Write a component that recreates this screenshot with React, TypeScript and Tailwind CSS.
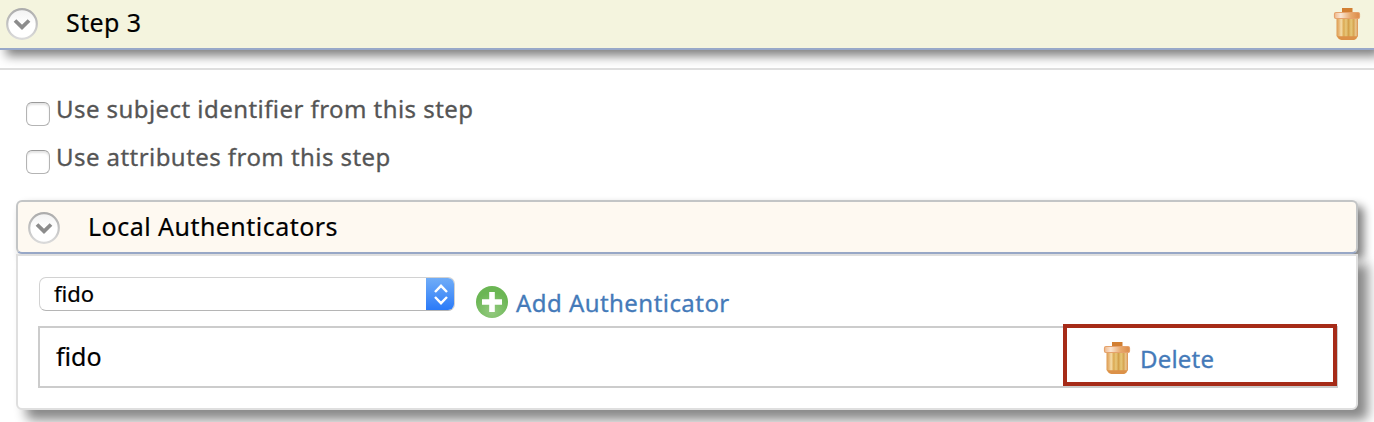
function Chevron() {
  return (
    <svg width="32" height="32" viewBox="0 0 32 32" className="shrink-0">
      <defs>
        <linearGradient id="ring" x1="0" y1="0" x2="0" y2="1">
          <stop offset="0" stopColor="#acacac" />
          <stop offset="1" stopColor="#dadada" />
        </linearGradient>
        <linearGradient id="disc" x1="0" y1="0" x2="0" y2="1">
          <stop offset="0" stopColor="#f2f2f2" />
          <stop offset="0.5" stopColor="#ffffff" />
        </linearGradient>
      </defs>
      <circle cx="16" cy="16" r="14.8" fill="url(#disc)" stroke="url(#ring)" strokeWidth="2.2" />
      <path d="M9 12.500 L16 19.400 L23 12.500" fill="none" stroke="#8c8c8c" strokeWidth="3.800" />
    </svg>
  );
}

function Trash() {
  return (
    <svg width="28" height="32" viewBox="0 0 28 32" className="shrink-0">
      <defs>
        <linearGradient id="lid" x1="0" y1="0" x2="1" y2="0">
          <stop offset="0" stopColor="#efb98c" />
          <stop offset="0.25" stopColor="#fae6d5" />
          <stop offset="0.65" stopColor="#e8a96c" />
          <stop offset="1" stopColor="#dc8a48" />
        </linearGradient>
        <linearGradient id="can" x1="0" y1="0" x2="1" y2="0">
          <stop offset="0" stopColor="#dd9a50" />
          <stop offset="0.12" stopColor="#e8b877" />
          <stop offset="0.22" stopColor="#f5dca8" />
          <stop offset="0.34" stopColor="#dba850" />
          <stop offset="0.44" stopColor="#e8c87c" />
          <stop offset="0.56" stopColor="#d3a04a" />
          <stop offset="0.68" stopColor="#e6c878" />
          <stop offset="0.8" stopColor="#d6a450" />
          <stop offset="0.9" stopColor="#ebc890" />
          <stop offset="1" stopColor="#d98e4c" />
        </linearGradient>
      </defs>
      <path d="M9 0h10.500v5H9z" fill="#d27f32" />
      <path d="M3.500 10H25V28q-1 3-4 4H8q-3-1-4.500-4z" fill="url(#can)" />
      <path d="M4 28.300H24.500q-1 3-4 3.700H8.500q-3-.7-4.500-3.700z" fill="#dc9148" />
      <rect x="1.500" y="4.500" width="25" height="6" rx="1.500" fill="url(#lid)" stroke="#e5a26c" strokeWidth="1.200" />
    </svg>
  );
}

function Option({ label }: { label: string }) {
  return (
    <label className="flex h-12 items-start">
      <span className="mt-[12px] size-6 shrink-0 rounded-[6px] border border-[#b4b4b4] border-t-[#9a9a9a] bg-white shadow-[inset_0_2px_2px_#e4e4e4]" />
      <span className="ml-[6px] text-[24px] leading-[37px] tracking-[0.44px] text-[#555] [-webkit-text-stroke:0.3px]">{label}</span>
    </label>
  );
}

export default function App() {
  return (
    <div className="h-[422px] w-full overflow-hidden whitespace-nowrap bg-white font-['Noto_Sans','Open_Sans',sans-serif] text-black">
      <header className="flex h-[50px] items-start border-b-2 border-[#98a8c8] bg-[#f4f4de] pl-[6px] pr-[13px] pt-[8px] shadow-[6px_6px_10px_#808080]">
        <Chevron />
        <span className="ml-7 -mt-[5px] text-[25px] leading-[38px] tracking-[0.4px] [-webkit-text-stroke:0.2px]">Step 3</span>
        <span className="ml-auto">
          <Trash />
        </span>
      </header>
      <div className="mt-[18px] h-[2px] bg-[#dedede]" />
      <div className="pl-[26px] pt-[20px]">
        <Option label="Use subject identifier from this step" />
        <Option label="Use attributes from this step" />
      </div>
      <section className="ml-4 mt-[14px] w-[1342px]">
        <div className="flex h-[54px] items-start rounded-[6px] border-2 border-[#c3c5c6] border-b-[#98a8c8] bg-[#fef9f1] pl-[10px] pt-[10px] shadow-[6px_6px_10px_#808080]">
          <Chevron />
          <span className="ml-7 -mt-[5px] text-[25px] leading-[38px] tracking-[0.47px] [-webkit-text-stroke:0.2px]">Local Authenticators</span>
        </div>
        <div className="h-[156px] rounded-b-[6px] border-2 border-[#dfdfdf] bg-white pl-5 pt-[21px] shadow-[10px_10px_12px_#888]">
          <div className="flex h-[49px] items-start">
            <div className="ml-px flex h-[34px] w-[416px] shrink-0 overflow-hidden rounded-[7px] border border-[#d2d2d2] border-b-[#b5b5b5] bg-white">
              <span className="flex-1 pl-[14px] text-[22px] leading-[30px] [-webkit-text-stroke:0.2px]">fido</span>
              <span className="-my-px -mr-px flex w-[29px] items-center justify-center bg-linear-to-b from-[#72aef7] to-[#2778f8]">
                <svg width="14" height="21" viewBox="0 0 14 21" fill="none" stroke="white" strokeWidth="2.400">
                  <path d="M1 8 L7 1.800 L13 8M1 13 L7 19.200 L13 13" />
                </svg>
              </span>
            </div>
            <svg width="32" height="32" viewBox="0 0 32 32" className="ml-[21px] mt-[9px] shrink-0">
              <defs>
                <radialGradient id="add" cx="0.5" cy="0.8" r="0.600">
                  <stop offset="0" stopColor="#94ca80" />
                  <stop offset="1" stopColor="#6bb654" />
                </radialGradient>
              </defs>
              <circle cx="16" cy="16" r="16" fill="url(#add)" />
              <path d="M16 6v20M6 16h20" stroke="white" strokeWidth="5.600" />
            </svg>
            <span className="ml-2 mt-[7px] text-[24px] leading-[38px] tracking-[0.45px] text-[#447ab9] [-webkit-text-stroke:0.3px]">Add Authenticator</span>
          </div>
          <div className="flex h-[62px] w-[1300px] border-2 border-[#ccc]">
            <span className="w-[1023px] shrink-0 pl-4 text-[25px] leading-[57px] [-webkit-text-stroke:0.2px]">fido</span>
            <div className="-mt-1 flex h-[62px] w-[274px] shrink-0 items-start border-4 border-[#a62b18] bg-white pl-9 pt-[14px]">
              <Trash />
              <span className="ml-[9px] -mt-[2px] text-[24px] leading-[38px] tracking-[0.2px] text-[#447ab9] [-webkit-text-stroke:0.3px]">Delete</span>
            </div>
          </div>
        </div>
      </section>
    </div>
  );
}
